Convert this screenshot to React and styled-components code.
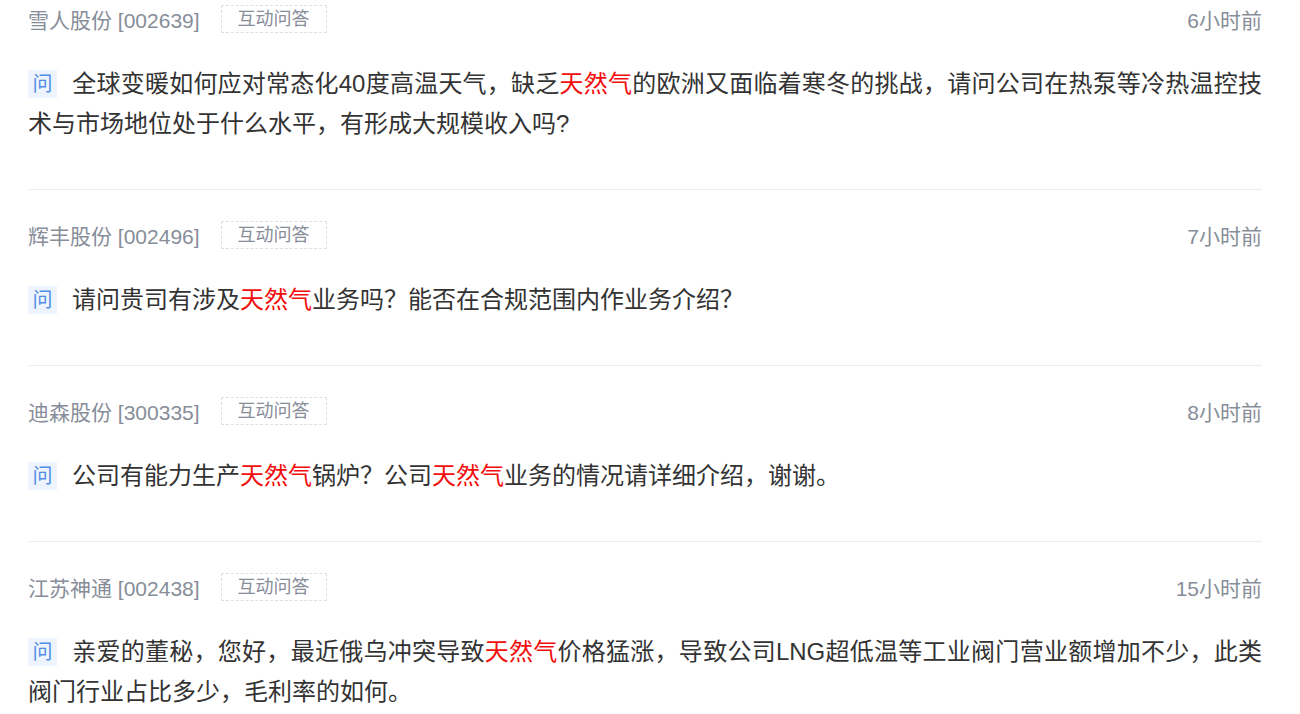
import React from 'react'
import styled, { createGlobalStyle } from 'styled-components'

const GlobalStyle = createGlobalStyle`
  html, body {
    margin: 0;
    padding: 0;
    background: #fff;
  }
  body {
    font-family: "Liberation Sans", "Noto Sans CJK SC", sans-serif;
  }
`

const List = styled.div`
  padding: 5px 38px 0 28px;
`

const Item = styled.div`
  padding: ${p => (p.first ? '0' : '31px')} 0 45px;
  border-bottom: 1px solid #ebedf0;
`

const Header = styled.div`
  display: flex;
  align-items: center;
  height: 28px;
`

const Company = styled.span`
  font-size: 21px;
  color: #878d99;
`

const Tag = styled.span`
  margin-left: 21px;
  height: 28px;
  box-sizing: border-box;
  padding: 0 16px;
  border: 1px dashed #dcdfe4;
  font-size: 18px;
  line-height: 27px;
  color: #878d99;
`

const Time = styled.span`
  margin-left: auto;
  font-size: 21px;
  color: #878d99;
`

const Question = styled.p`
  margin: 31px 0 0;
  font-size: 24px;
  line-height: 40px;
  color: #333;
  text-align: justify;
`

const Badge = styled.span`
  display: inline-block;
  width: 29px;
  height: 28px;
  margin-right: 15px;
  background: #eef4fd;
  color: #4f8de8;
  font-size: 20px;
  line-height: 28px;
  text-align: center;
  vertical-align: 1px;
`

const Hit = styled.span`
  color: #f20d0d;
`

const items = [
  {
    company: '雪人股份 [002639]',
    time: '6小时前',
    text: '全球变暖如何应对常态化40度高温天气，缺乏天然气的欧洲又面临着寒冬的挑战，请问公司在热泵等冷热温控技术与市场地位处于什么水平，有形成大规模收入吗?'
  },
  {
    company: '辉丰股份 [002496]',
    time: '7小时前',
    text: '请问贵司有涉及天然气业务吗？能否在合规范围内作业务介绍？'
  },
  {
    company: '迪森股份 [300335]',
    time: '8小时前',
    text: '公司有能力生产天然气锅炉？公司天然气业务的情况请详细介绍，谢谢。'
  },
  {
    company: '江苏神通 [002438]',
    time: '15小时前',
    text: '亲爱的董秘，您好，最近俄乌冲突导致天然气价格猛涨，导致公司LNG超低温等工业阀门营业额增加不少，此类阀门行业占比多少，毛利率的如何。'
  }
]

// mark every occurrence of the search keyword
const highlight = (text, word) =>
  text.split(word).flatMap((part, i) =>
    i === 0 ? [part] : [<Hit key={i}>{word}</Hit>, part]
  )

export default function App() {
  return (
    <>
      <GlobalStyle />
      <List>
        {items.map((item, i) => (
          <Item key={item.company} first={i === 0}>
            <Header>
              <Company>{item.company}</Company>
              <Tag>互动问答</Tag>
              <Time>{item.time}</Time>
            </Header>
            <Question>
              <Badge>问</Badge>
              {highlight(item.text, '天然气')}
            </Question>
          </Item>
        ))}
      </List>
    </>
  )
}
